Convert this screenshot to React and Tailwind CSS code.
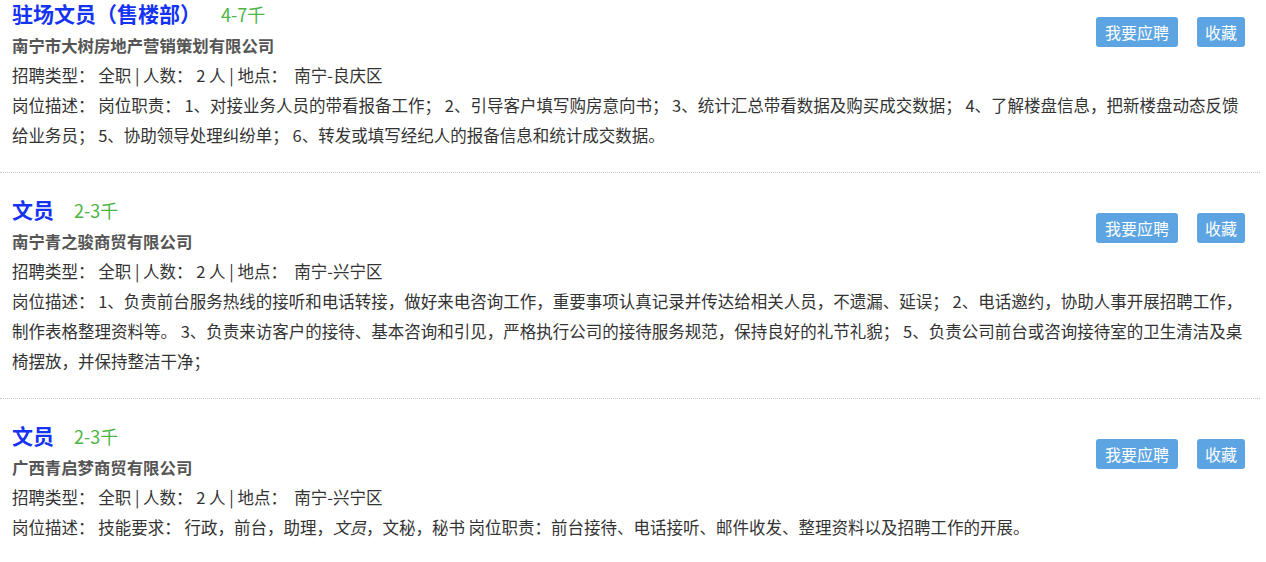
import React from 'react';

const jobs = [
  {
    title: '驻场文员（售楼部）',
    salary: '4-7千',
    company: '南宁市大树房地产营销策划有限公司',
    location: '南宁-良庆区',
    desc: (
      <>岗位描述：&nbsp;岗位职责：&nbsp;1、对接业务人员的带看报备工作；&nbsp;2、引导客户填写购房意向书；&nbsp;3、统计汇总带看数据及购买成交数据；&nbsp;4、了解楼盘信息，把新楼盘动态反馈给业务员；&nbsp;5、协助领导处理纠纷单；&nbsp;6、转发或填写经纪人的报备信息和统计成交数据。</>
    ),
  },
  {
    title: '文员',
    salary: '2-3千',
    company: '南宁青之骏商贸有限公司',
    location: '南宁-兴宁区',
    desc: (
      <>岗位描述：&nbsp;1、负责前台服务热线的接听和电话转接，做好来电咨询工作，重要事项认真记录并传达给相关人员，不遗漏、延误；&nbsp;2、电话邀约，协助人事开展招聘工作，制作表格整理资料等。&nbsp;3、负责来访客户的接待、基本咨询和引见，严格执行公司的接待服务规范，保持良好的礼节礼貌；&nbsp;5、负责公司前台或咨询接待室的卫生清洁及桌椅摆放，并保持整洁干净；</>
    ),
  },
  {
    title: '文员',
    salary: '2-3千',
    company: '广西青启梦商贸有限公司',
    location: '南宁-兴宁区',
    desc: (
      <>岗位描述：&nbsp;技能要求：&nbsp;行政，前台，助理，<em>文员</em>，文秘，秘书 岗位职责：前台接待、电话接听、邮件收发、整理资料以及招聘工作的开展。</>
    ),
  },
];

const JobCard = ({ job, last }) => (
  <div
    className={`pt-[20px] pb-[22px] pl-[12px] pr-[10px] ${
      last ? '' : 'border-b border-dotted border-[#c8c8c8]'
    }`}
  >
    <div className="flex items-start justify-between">
      <div>
        <div className="flex items-baseline h-[33px] leading-[32px]">
          <span className="text-[21px] font-bold text-[#1533f2]">{job.title}</span>
          <span className="ml-[20px] text-[18px] text-[#4cb545]">{job.salary}</span>
        </div>
        <div className="text-[16.4px] leading-[30px] font-bold text-[#555]">{job.company}</div>
      </div>
      <div className="flex gap-[19px] mt-[20px] mr-[5px]">
        <button className="h-[30px] px-[9px] rounded-[3px] bg-[#5ca4e2] text-white text-[16px] leading-[30px]">
          我要应聘
        </button>
        <button className="h-[30px] px-[8px] rounded-[3px] bg-[#5ca4e2] text-white text-[16px] leading-[30px]">
          收藏
        </button>
      </div>
    </div>
    <div className="text-[16.5px] leading-[30px] text-[#333]">
      招聘类型：&nbsp;全职&nbsp;|&nbsp;人数：&nbsp;2&nbsp;人&nbsp;|&nbsp;地点：&nbsp;&nbsp;{job.location}
    </div>
    <div className="text-[16.5px] leading-[30px] text-[#333]">{job.desc}</div>
  </div>
);

export default function App() {
  return (
    <div
      className="bg-white min-h-[562px] overflow-hidden"
      style={{ fontFamily: '"Noto Sans CJK SC", "Noto Sans", sans-serif' }}
    >
      <div className="w-[1260px] -mt-[23px]">
        {jobs.map((job, i) => (
          <JobCard key={i} job={job} last={i === jobs.length - 1} />
        ))}
      </div>
    </div>
  );
}
